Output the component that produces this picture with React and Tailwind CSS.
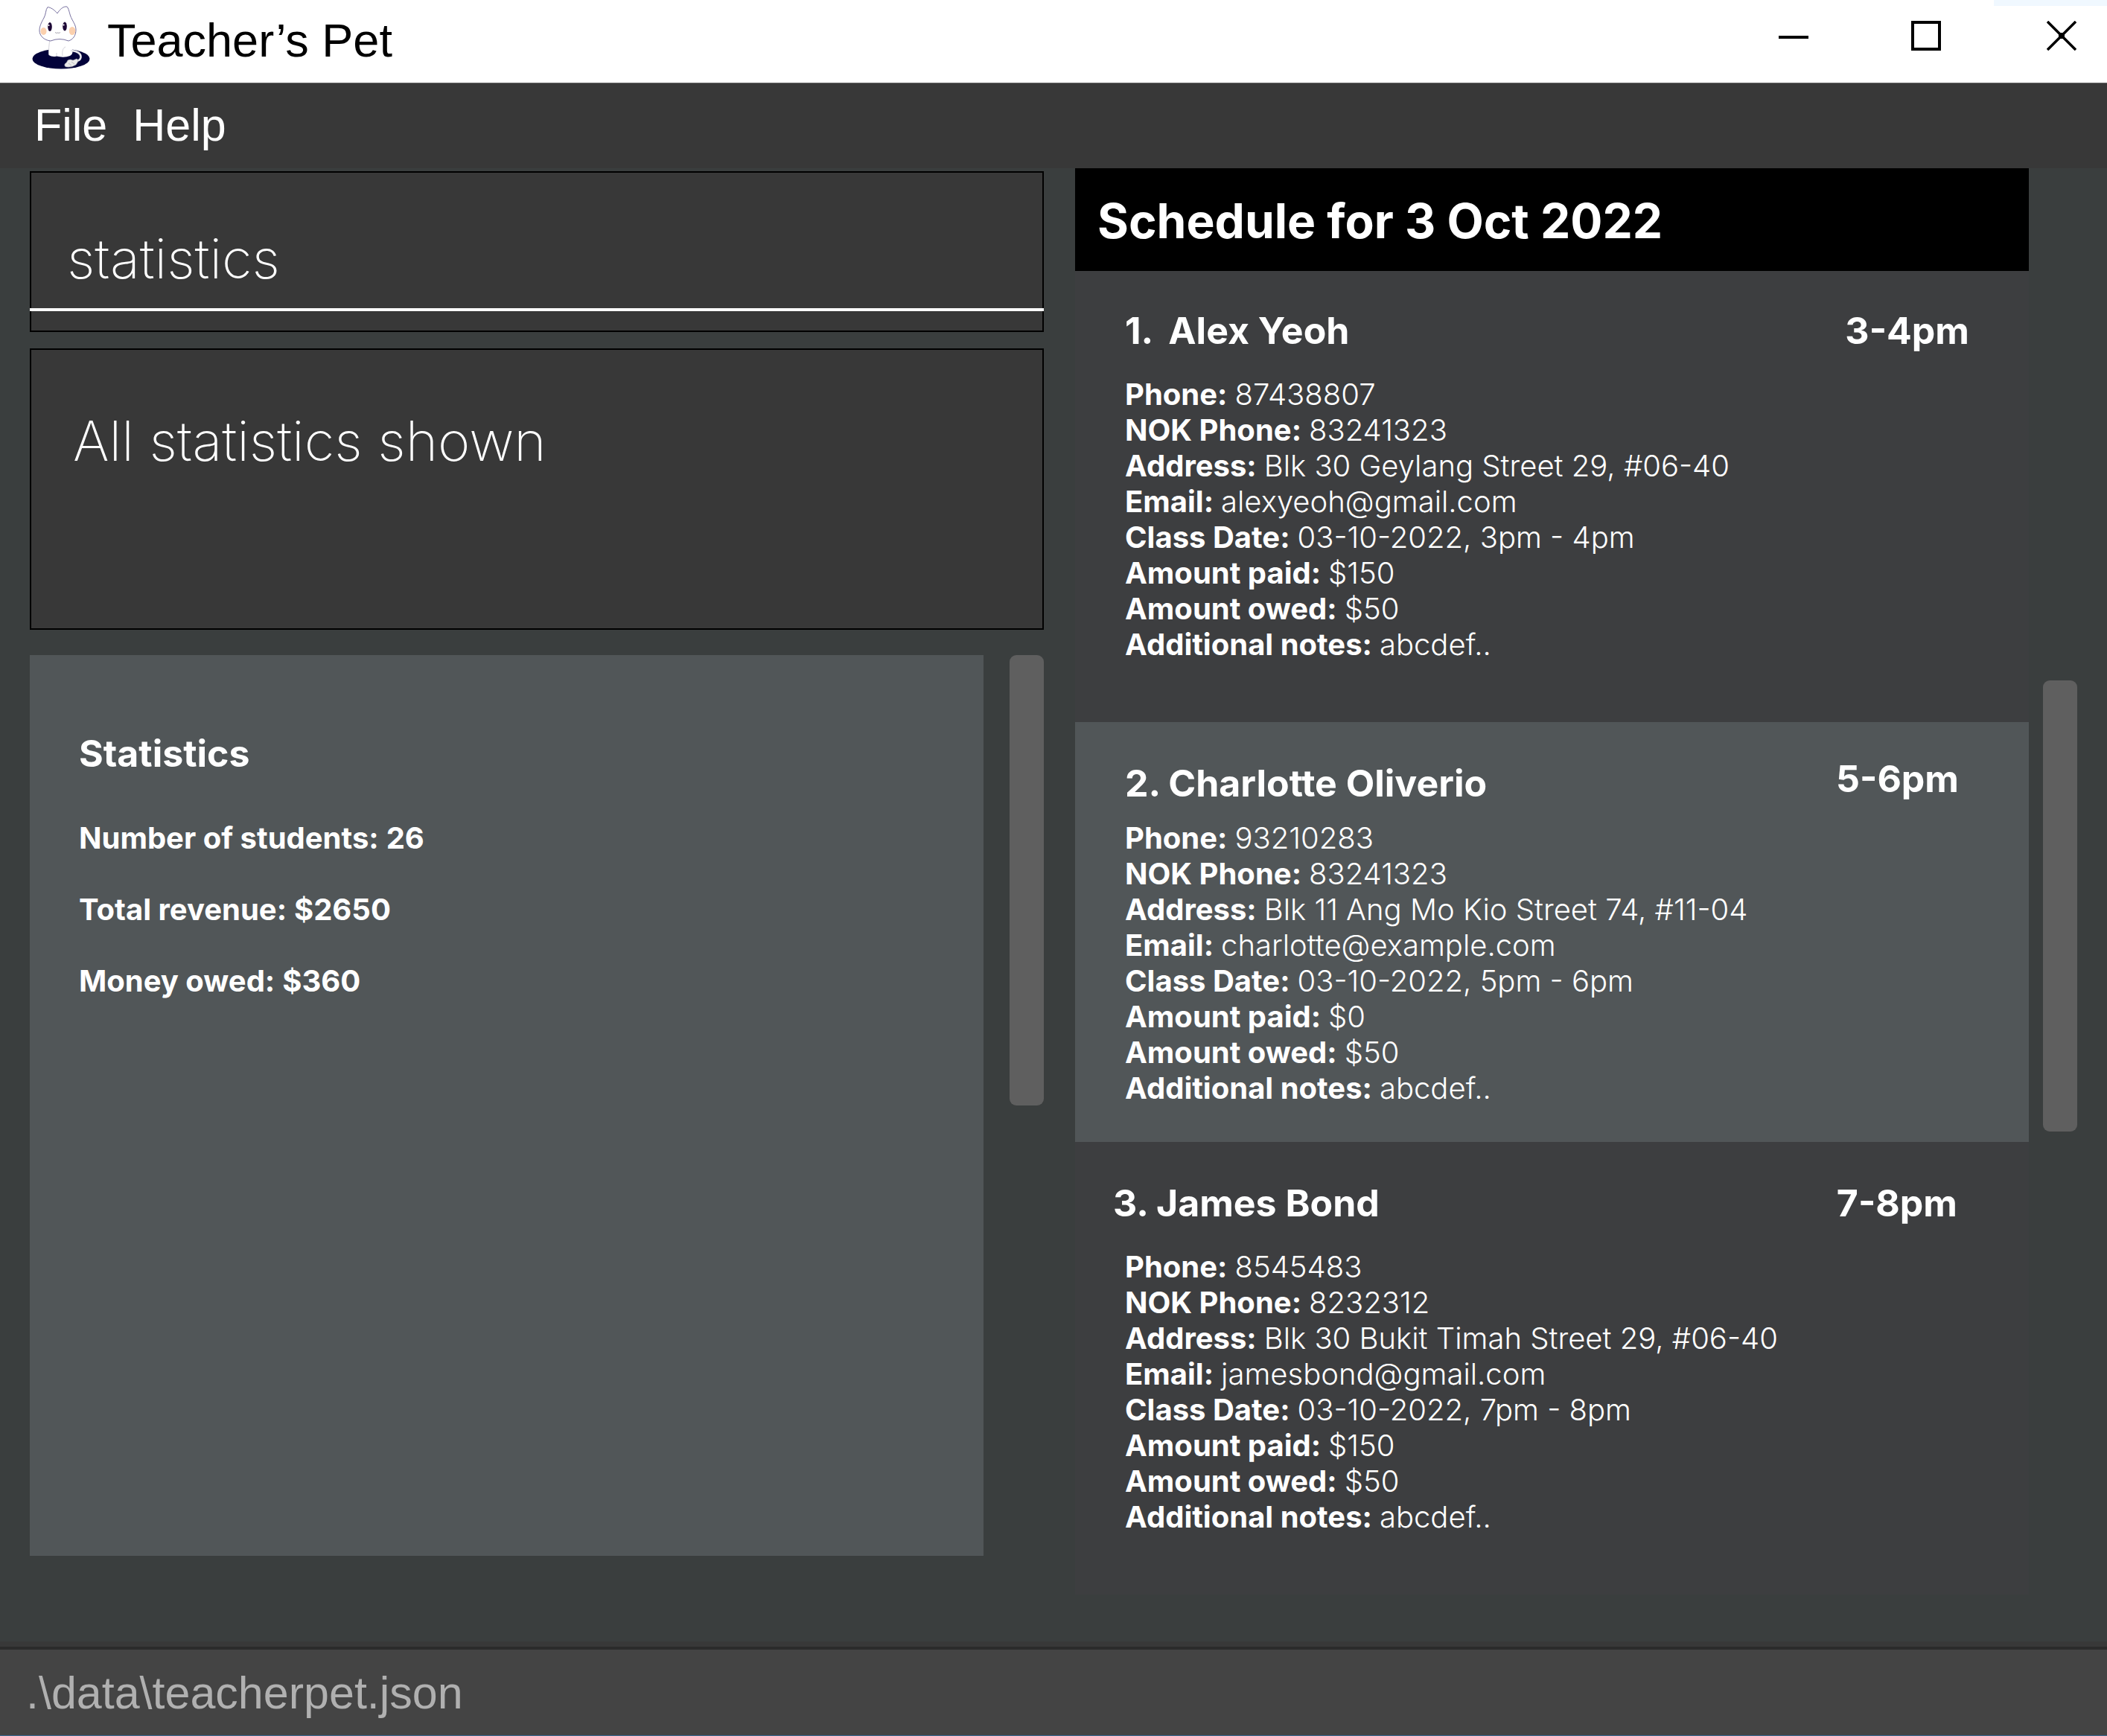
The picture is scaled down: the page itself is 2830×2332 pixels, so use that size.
const sans = "font-['Inter','Liberation_Sans',sans-serif]";

const students = [
  {
    number: "1.",
    name: "Alex Yeoh",
    time: "3-4pm",
    card: "bg-[#3d3e40] pt-[50px] pb-20 pl-[67px] pr-20",
    heading: "gap-5",
    details: "mt-8",
    fields: [
      ["Phone:", "87438807"],
      ["NOK Phone:", "83241323"],
      ["Address:", "Blk 30 Geylang Street 29, #06-40"],
      ["Email:", "alexyeoh@gmail.com"],
      ["Class Date:", "03-10-2022, 3pm - 4pm"],
      ["Amount paid:", "$150"],
      ["Amount owed:", "$50"],
      ["Additional notes:", "abcdef.."],
    ],
  },
  {
    number: "2.",
    name: "Charlotte Oliverio",
    time: "5-6pm",
    card: "bg-[#515658] pt-[46px] pb-12 pl-[67px] pr-[94px]",
    heading: "gap-2.5 pt-1.5",
    details: "mt-5",
    fields: [
      ["Phone:", "93210283"],
      ["NOK Phone:", "83241323"],
      ["Address:", "Blk 11 Ang Mo Kio Street 74, #11-04"],
      ["Email:", "charlotte@example.com"],
      ["Class Date:", "03-10-2022, 5pm - 6pm"],
      ["Amount paid:", "$0"],
      ["Amount owed:", "$50"],
      ["Additional notes:", "abcdef.."],
    ],
  },
  {
    number: "3.",
    name: "James Bond",
    time: "7-8pm",
    card: "bg-[#3d3e40] pt-[52px] pb-20 pl-[67px] pr-24",
    heading: "-ml-4 gap-2.5",
    details: "mt-8",
    fields: [
      ["Phone:", "8545483"],
      ["NOK Phone:", "8232312"],
      ["Address:", "Blk 30 Bukit Timah Street 29, #06-40"],
      ["Email:", "jamesbond@gmail.com"],
      ["Class Date:", "03-10-2022, 7pm - 8pm"],
      ["Amount paid:", "$150"],
      ["Amount owed:", "$50"],
      ["Additional notes:", "abcdef.."],
    ],
  },
];

const stats = [
  ["Number of students:", "26"],
  ["Total revenue:", "$2650"],
  ["Money owed:", "$360"],
];

function CatLogo() {
  return (
    <svg viewBox="0 0 100 100" className="size-[100px]" aria-hidden="true">
      <ellipse cx="52" cy="79" rx="38.5" ry="13.5" fill="#02023a" />
      <path d="M37 52 C36 60 35 67 35.500 74 Q40 77 46 75.500 Q56 78 64 75 Q68 73 67.500 68 C67 61 64 56 62 52Z" fill="#fff" />
      <path d="M37 52 C36 60 35 67 35.500 73 M46 75 V71 M54 75 C53 68 55 64 58 63" fill="none" stroke="#c9c8d2" strokeWidth="0.8" />
      <path d="M66 68 C74 69 79 72 78.500 77 C78 80 75 82 71 82" fill="none" stroke="#e6e6ea" strokeWidth="2.600" strokeLinecap="round" />
      <path d="M57 86 Q60 84 61 81 Q64 79 68 81 L73 79 Q76 80 74 84 L72 87 Q66 91 60 90 Q56 90 57 86Z" fill="#e9e9e9" stroke="#9b9ba8" strokeWidth="0.600" />
      <path d="M62 85 L66 88 M66 83 L70 86" stroke="#a8a8ae" strokeWidth="0.700" />
      <path d="M47 18 C43 13 38 10 34 9.500 C31 13 32 19 29 24 C25 31 23 36 23 41 C23 48 29 54 38 55 Q50 50 62 55 C68 53 72 48 72 40 C72 33 67 28 64.500 21 C63 16 62 11 60 9 C55 8 50 13 47 18Z" fill="#fff" stroke="#77709f" strokeWidth="1" />
      <ellipse cx="28.500" cy="42" rx="4" ry="5" fill="#fbd0ae" />
      <ellipse cx="67" cy="41.500" rx="4.200" ry="5.500" fill="#fbd0ae" />
      <ellipse cx="37" cy="36" rx="2.800" ry="6" fill="#1d0736" />
      <ellipse cx="57" cy="35.500" rx="2.800" ry="6" fill="#1d0736" />
      <circle cx="35.500" cy="34" r="1.100" fill="#fff" />
      <circle cx="55.500" cy="33.500" r="1.100" fill="#fff" />
      <path d="M44 43.500 Q45.500 45 47.500 44 Q49.500 45 51 43.500" fill="none" stroke="#a3a1ac" strokeWidth="1" />
    </svg>
  );
}

function TitleBar() {
  return (
    <header className="flex h-[111px] items-start justify-between bg-white">
      <div className="flex items-start pl-[30px]">
        <CatLogo />
        <h1 className="pt-[18px] pl-3.5 font-['Liberation_Sans',Arial,sans-serif] text-[63px] leading-[72px] text-black">
          Teacher’s Pet
        </h1>
      </div>
      <div className="flex">
        <button type="button" aria-label="Minimize" className="flex h-24 w-[178px] items-center justify-center pr-1">
          <svg viewBox="0 0 40 40" className="size-10" fill="none" stroke="#000" strokeWidth="4">
            <path d="M0 22H40" />
          </svg>
        </button>
        <button type="button" aria-label="Maximize" className="flex h-24 w-[178px] items-center justify-center pr-1">
          <svg viewBox="0 0 40 40" className="size-10" fill="none" stroke="#000" strokeWidth="4">
            <path d="M2 2H38V38H2Z" />
          </svg>
        </button>
        <button type="button" aria-label="Close" className="flex h-24 w-[152px] flex-col items-center border-t-8 border-[#f0f8ff] pl-[30px]">
          <svg viewBox="0 0 40 40" className="mt-5 size-10" fill="none" stroke="#000" strokeWidth="3.5">
            <path d="M1 1L39 39M39 1L1 39" />
            <path d="M16 16H24V24H16Z" fill="#000" stroke="none" />
          </svg>
        </button>
      </div>
    </header>
  );
}

function StudentCard({ student }) {
  return (
    <li className={student.card}>
      <div className="flex items-start justify-between text-[50px] leading-[60px] font-bold">
        <h3 className={"flex " + student.heading}>
          <span>{student.number}</span>
          <span>{student.name}</span>
        </h3>
        <p>{student.time}</p>
      </div>
      <dl className={"text-[40px] leading-[48px] " + student.details}>
        {student.fields.map(([label, value]) => (
          <div key={label} className="flex gap-2.5">
            <dt className="font-bold">{label}</dt>
            <dd className="font-light">{value}</dd>
          </div>
        ))}
      </dl>
    </li>
  );
}

export default function App() {
  return (
    <div className={"flex min-h-screen flex-col bg-[#3a3e3e] text-white " + sans}>
      <TitleBar />
      <nav className="flex h-[115px] gap-[34px] border-t border-[#6b6b6b] bg-[#383838] pt-[22px] pl-[46px] font-['Liberation_Sans',Arial,sans-serif] text-[61px] leading-[68px]">
        <button type="button" className="self-start">File</button>
        <button type="button" className="self-start">Help</button>
      </nav>

      <main className="grid flex-1 grid-cols-[1362fr_1346fr] gap-[42px] px-10">
        <div className="flex flex-col pt-1">
          <form className="border-2 border-black bg-[#383838] pt-[66px] pb-[26px]" onSubmit={(e) => e.preventDefault()}>
            <input
              type="text"
              aria-label="Command"
              defaultValue="statistics"
              className="-mx-0.5 block h-[120px] w-[calc(100%+4px)] border-b-4 border-white bg-transparent pb-[18px] pl-[50px] text-[74px] font-extralight outline-none"
            />
          </form>
          <output className="mt-[22px] h-[378px] border-2 border-black bg-[#383838] pt-[78px] pl-14 text-[74px] leading-[88px] font-extralight">
            All statistics shown
          </output>
          <div className="mt-[34px] flex gap-[35px]">
            <section className="h-[1210px] flex-1 bg-[#515658] pt-[102px] pl-[66px] font-bold">
              <h2 className="text-[50px] leading-[60px]">Statistics</h2>
              <dl className="mt-[60px] flex flex-col gap-12 text-[40px] leading-[48px]">
                {stats.map(([label, value]) => (
                  <div key={label} className="flex gap-2.5">
                    <dt>{label}</dt>
                    <dd>{value}</dd>
                  </div>
                ))}
              </dl>
            </section>
            <div className="h-[605px] w-[46px] rounded-[9px] bg-[#5f5f5f]" />
          </div>
        </div>

        <div className="flex gap-[19px]">
          <section className="flex-1">
            <h2 className="bg-black pt-8 pb-7 pl-[30px] text-[64px] leading-[78px] font-bold">
              Schedule for 3 Oct 2022
            </h2>
            <ul>
              {students.map((s) => (
                <StudentCard key={s.name} student={s} />
              ))}
            </ul>
          </section>
          <div className="mt-[688px] h-[606px] w-[46px] rounded-[9px] bg-[#5f5f5f]" />
        </div>
      </main>

      <footer className="border-t-[7px] border-[#383838]">
        <p className="h-[120px] border-t-4 border-b border-t-[#2b2b2b] border-b-[#3b6a94] bg-[#444444] pt-6 pl-[35px] font-['Liberation_Sans',Arial,sans-serif] text-[61px] leading-[68px] text-[#b0b0b0]">
          .\data\teacherpet.json
        </p>
      </footer>
    </div>
  );
}
